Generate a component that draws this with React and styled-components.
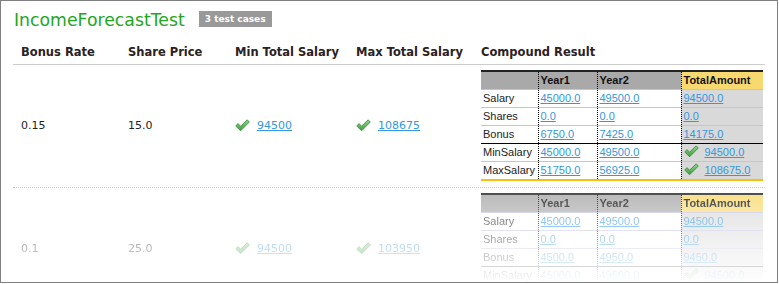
import React from "react";
import styled, { createGlobalStyle, css } from "styled-components";

const Global = createGlobalStyle`
  html, body { margin: 0; padding: 0; background: #fff; }
  body { font-family: "DejaVu Sans", Verdana, sans-serif; }
`;

const Frame = styled.div`
  width: 776px;
  height: 281px;
  border: 1px solid #808080;
  overflow: hidden;
  background: #fff;
`;

const TitleBar = styled.div`
  display: flex;
  align-items: center;
  gap: 14px;
  padding: 6px 12px 0 13px;
  height: 26px;
`;

const Title = styled.h1`
  margin: 0;
  font-size: 17.3px;
  font-weight: normal;
  color: #23a623;
  line-height: 20px;
`;

const Badge = styled.span`
  background: #999;
  color: #fff;
  font-size: 9px;
  font-weight: bold;
  line-height: 16px;
  padding: 0 6px;
  margin-top: -2px;
`;

const Body = styled.div`
  margin: 0 12px;
`;

const cols = css`
  display: grid;
  grid-template-columns: 107px 107px 121px 125px 1fr;
`;

const HeaderRow = styled.div`
  ${cols};
  border-bottom: 1px solid #ccc;
  padding: 12px 0 5px;
`;

const HeadCell = styled.div`
  padding-left: 8px;
  font-size: 11.5px;
  font-weight: bold;
  color: #2a2222;
  line-height: 14px;
`;

const Row = styled.div`
  ${cols};
  align-items: center;
  padding: 5px 0 6px;
  border-bottom: ${(p) => (p.$last ? "none" : "1px dotted #c8c8c8")};
  ${(p) =>
    p.$faded &&
    css`
      -webkit-mask-image: linear-gradient(to bottom, rgba(0,0,0,0.85) 0px, rgba(0,0,0,0) 96px);
      mask-image: linear-gradient(to bottom, rgba(0,0,0,0.85) 0px, rgba(0,0,0,0) 96px);
    `}
`;

const Cell = styled.div`
  padding-left: 8px;
  font-size: 11px;
  color: #222;
  display: flex;
  align-items: center;
  gap: 7px;
`;

const Link = styled.a`
  color: #3597dd;
  text-decoration: underline;
  cursor: pointer;
`;

const Compound = styled.table`
  border-collapse: collapse;
  table-layout: fixed;
  width: 282px;
  font-family: "Liberation Sans", Arial, sans-serif;
  font-size: 11px;
  border-bottom: 2px solid #f4c20d;
`;

const Th = styled.th`
  background: ${(p) => (p.$total ? "#f8d970" : "#a9a9a9")};
  border-top: 2px solid #222;
  border-left: ${(p) => (p.$first ? "none" : "1px dotted #000")};
  text-align: left;
  font-weight: bold;
  color: #111;
  height: 17px;
  padding: 0 0 0 2px;
  line-height: 17px;
`;

const Td = styled.td`
  background: ${(p) => (p.$total ? "#d9d9d9" : "#fff")};
  border-top: 1px solid ${(p) => (p.$strong ? "#000" : "#c2c2e6")};
  border-left: ${(p) => (p.$first ? "none" : "1px dotted #000")};
  color: #222;
  height: 17px;
  padding: 0 0 0 2px;
  line-height: 17px;
  white-space: nowrap;
`;

const CheckWrap = styled.span`
  display: inline-flex;
  align-items: center;
  margin-right: ${(p) => p.$gap || 0}px;
  vertical-align: -2px;
`;

let gid = 0;
const Check = ({ gap }) => {
  const id = `chk${gid++}`;
  return (
    <CheckWrap $gap={gap}>
      <svg width="15" height="13" viewBox="0 0 15 13">
        <defs>
          <linearGradient id={id} x1="0" y1="0" x2="0" y2="1">
            <stop offset="0" stopColor="#8fd68f" />
            <stop offset="1" stopColor="#3f9c3f" />
          </linearGradient>
        </defs>
        <path
          d="M0.8 7 L3 4.6 L5.6 7.2 L12.2 0.8 L14.3 3 L5.6 11.8 Z"
          fill={`url(#${id})`}
          stroke="#3f8f3f"
          strokeWidth="0.9"
          strokeLinejoin="round"
        />
      </svg>
    </CheckWrap>
  );
};

const rowsData = [
  {
    rate: "0.15",
    price: "15.0",
    min: "94500",
    max: "108675",
    table: [
      ["Salary", "45000.0", "49500.0", "94500.0"],
      ["Shares", "0.0", "0.0", "0.0"],
      ["Bonus", "6750.0", "7425.0", "14175.0"],
      ["MinSalary", "45000.0", "49500.0", "94500.0", true],
      ["MaxSalary", "51750.0", "56925.0", "108675.0", true],
    ],
  },
  {
    rate: "0.1",
    price: "25.0",
    min: "94500",
    max: "103950",
    table: [
      ["Salary", "45000.0", "49500.0", "94500.0"],
      ["Shares", "0.0", "0.0", "0.0"],
      ["Bonus", "4500.0", "4950.0", "9450.0"],
      ["MinSalary", "45000.0", "49500.0", "94500.0", true],
      ["MaxSalary", "49500.0", "54450.0", "103950.0", true],
    ],
  },
];

const CompoundTable = ({ rows }) => (
  <Compound>
    <colgroup>
      <col style={{ width: 57 }} />
      <col style={{ width: 59 }} />
      <col style={{ width: 84 }} />
      <col style={{ width: 82 }} />
    </colgroup>
    <thead>
      <tr>
        <Th $first />
        <Th>Year1</Th>
        <Th>Year2</Th>
        <Th $total>TotalAmount</Th>
      </tr>
    </thead>
    <tbody>
      {rows.map((r, i) => (
        <tr key={r[0]}>
          <Td $first $strong={i === 3}>{r[0]}</Td>
          <Td $strong={i === 3}><Link>{r[1]}</Link></Td>
          <Td $strong={i === 3}><Link>{r[2]}</Link></Td>
          <Td $total $strong={i === 3}>
            {r[4] && <Check gap={6} />}
            <Link>{r[3]}</Link>
          </Td>
        </tr>
      ))}
    </tbody>
  </Compound>
);

export default function App() {
  return (
    <>
      <Global />
      <Frame>
        <TitleBar>
          <Title>IncomeForecastTest</Title>
          <Badge>3 test cases</Badge>
        </TitleBar>
        <Body>
          <HeaderRow>
            <HeadCell>Bonus Rate</HeadCell>
            <HeadCell>Share Price</HeadCell>
            <HeadCell>Min Total Salary</HeadCell>
            <HeadCell>Max Total Salary</HeadCell>
            <HeadCell>Compound Result</HeadCell>
          </HeaderRow>
          {rowsData.map((d, i) => (
            <Row key={i} $faded={i === 1} $last={i === 1}>
              <Cell>{d.rate}</Cell>
              <Cell>{d.price}</Cell>
              <Cell>
                <Check />
                <Link>{d.min}</Link>
              </Cell>
              <Cell>
                <Check />
                <Link>{d.max}</Link>
              </Cell>
              <Cell>
                <CompoundTable rows={d.table} />
              </Cell>
            </Row>
          ))}
        </Body>
      </Frame>
    </>
  );
}
